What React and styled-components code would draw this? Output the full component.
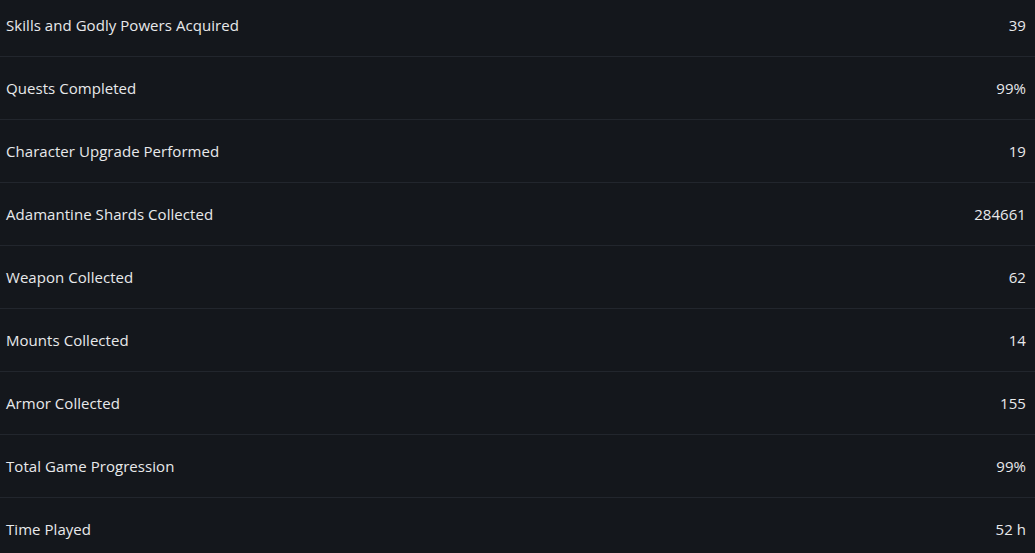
import React from 'react';
import styled, { createGlobalStyle } from 'styled-components';

const GlobalStyle = createGlobalStyle`
  html, body {
    margin: 0;
    padding: 0;
    background: #14171c;
    overflow: hidden;
  }
`;

const stats = [
  { label: 'Skills and Godly Powers Acquired', value: '39' },
  { label: 'Quests Completed', value: '99%' },
  { label: 'Character Upgrade Performed', value: '19' },
  { label: 'Adamantine Shards Collected', value: '284661' },
  { label: 'Weapon Collected', value: '62' },
  { label: 'Mounts Collected', value: '14' },
  { label: 'Armor Collected', value: '155' },
  { label: 'Total Game Progression', value: '99%' },
  { label: 'Time Played', value: '52 h' },
];

const Page = styled.div`
  width: 1035px;
  height: 553px;
  overflow: hidden;
  background: #14171c;
`;

const List = styled.ul`
  list-style: none;
  margin: -6px 0 0;
  padding: 0;
`;

const Row = styled.li`
  display: flex;
  align-items: center;
  justify-content: space-between;
  box-sizing: border-box;
  height: 63px;
  padding: 0 9px 1px 6px;
  border-bottom: 1px solid #22262d;
  font-family: 'Open Sans', 'Noto Sans', sans-serif;
  font-size: 15px;
  letter-spacing: 0.05px;
  color: #e8e9eb;

  &:last-child {
    border-bottom: none;
  }
`;

const Label = styled.span``;

const Value = styled.span`
  text-align: right;
`;

export default function App() {
  return (
    <Page>
      <GlobalStyle />
      <List>
        {stats.map((s) => (
          <Row key={s.label}>
            <Label>{s.label}</Label>
            <Value>{s.value}</Value>
          </Row>
        ))}
      </List>
    </Page>
  );
}
